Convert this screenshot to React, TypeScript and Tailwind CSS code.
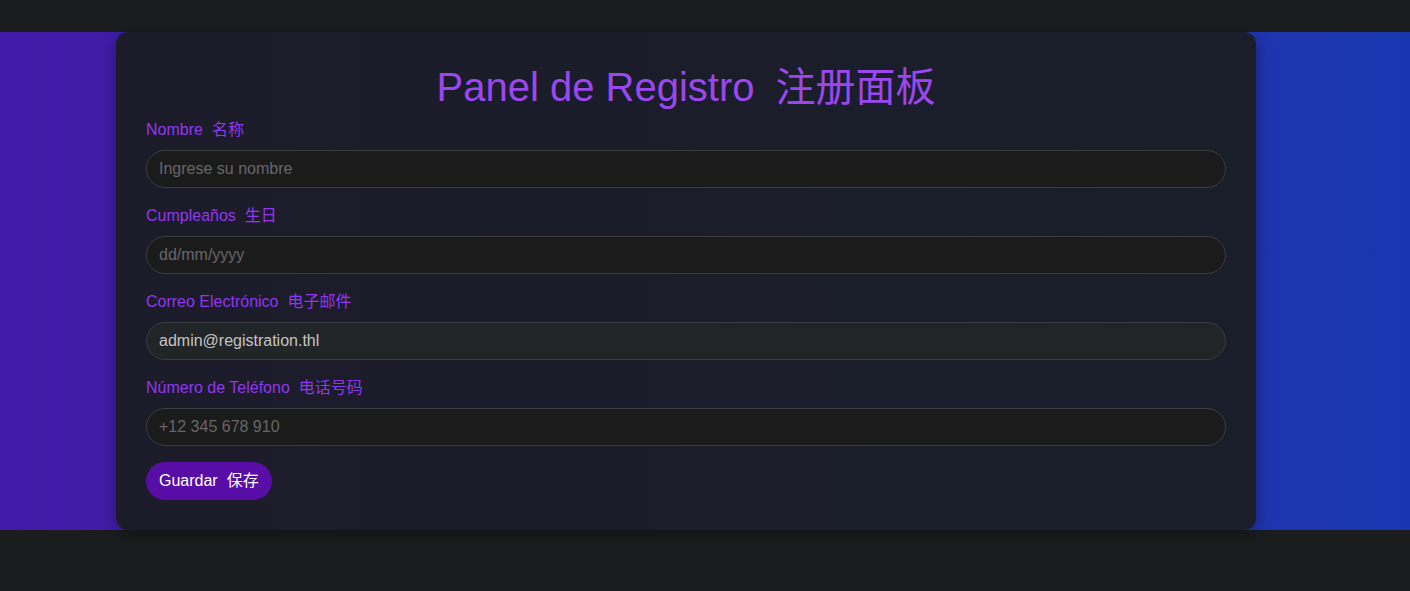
import React from "react";

const fields = [
  { key: "name", es: "Nombre", zh: "名称", placeholder: "Ingrese su nombre", value: "" },
  { key: "birthday", es: "Cumpleaños", zh: "生日", placeholder: "dd/mm/yyyy", value: "" },
  { key: "email", es: "Correo Electrónico", zh: "电子邮件", placeholder: "", value: "admin@registration.thl" },
  { key: "phone", es: "Número de Teléfono", zh: "电话号码", placeholder: "+12 345 678 910", value: "" },
];

const font = { fontFamily: '"Liberation Sans", Arial, "Noto Sans CJK SC", sans-serif' };

export default function App() {
  return (
    <div className="min-h-[591px] bg-[#1b1c1e] pt-8" style={font}>
      <div className="bg-linear-to-r from-[#4219a8] to-[#1737b0]">
        <div className="ml-[116px] w-[1140px] rounded-xl bg-linear-to-r from-[#1c1b2a] to-[#191e2a] px-[30px] pt-[31px] pb-[30px] shadow-[0_4px_16px_rgba(0,0,0,0.35)]">
          <h1 className="mb-[7px] text-center text-[40px] leading-[48px] text-[#9a47ef]">
            Panel de Registro<span className="ml-[21px]">注册面板</span>
          </h1>
          <form className="flex flex-col gap-4" onSubmit={(e) => e.preventDefault()}>
            {fields.map((f) => (
              <div key={f.key}>
                <label className="mb-[8px] flex gap-[9px] text-base leading-6 text-[#9137f0]">
                  <span>{f.es}</span>
                  <span>{f.zh}</span>
                </label>
                <input
                  defaultValue={f.value}
                  placeholder={f.placeholder}
                  className={`h-[38px] w-full rounded-full border border-[#3b3c3f] px-3 text-base outline-none placeholder:text-[#66666a] ${
                    f.value ? "bg-[#222527] text-[#c4c4c4]" : "bg-[#1b1b1c] text-[#c4c4c4]"
                  }`}
                  style={font}
                />
              </div>
            ))}
            <button
              type="submit"
              className="flex h-[38px] w-[126px] items-center gap-[9px] rounded-full bg-[#580ea6] pl-[13px] text-base text-white"
              style={font}
            >
              <span>Guardar</span>
              <span>保存</span>
            </button>
          </form>
        </div>
      </div>
    </div>
  );
}
